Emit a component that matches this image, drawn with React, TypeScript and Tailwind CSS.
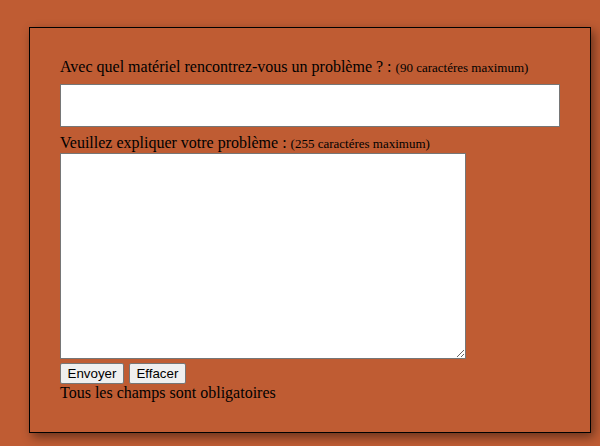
export default function App() {
  return (
    <div className="min-h-[446px] w-full overflow-hidden bg-[#bf5c33] pt-[27px] pl-[29px]">
      <form className="box-border w-[562px] border border-black px-[30px] pt-[30px] pb-[30px] font-['Liberation_Serif',serif] text-[16px] leading-[18px] text-black shadow-[3px_4px_10px_rgba(0,0,0,0.45)]">
        <label className="block">
          Avec quel matériel rencontrez-vous un problème ? :{" "}
          <span className="text-[13px]">(90 caractéres maximum)</span>
        </label>
        <input
          type="text"
          maxLength={90}
          className="mt-[7px] mb-[7px] box-border block h-[43px] w-full border border-[#767676] bg-white outline-none"
        />
        <label className="block">
          Veuillez expliquer votre problème :{" "}
          <span className="text-[13px]">(255 caractéres maximum)</span>
        </label>
        <textarea
          maxLength={255}
          className="box-border block h-[206px] w-[406px] resize border border-[#767676] bg-white outline-none"
        />
        <div className="mt-[4px] flex gap-[5px] font-['Liberation_Sans',sans-serif] text-[13.33px] leading-[15px]">
          <button
            type="button"
            className="box-border h-[21px] rounded-[2px] border border-[#767676] bg-[#efefef] px-[6.5px]"
          >
            Envoyer
          </button>
          <button
            type="reset"
            className="box-border h-[21px] rounded-[2px] border border-[#767676] bg-[#efefef] px-[6.5px]"
          >
            Effacer
          </button>
        </div>
        <p>Tous les champs sont obligatoires</p>
      </form>
    </div>
  );
}
